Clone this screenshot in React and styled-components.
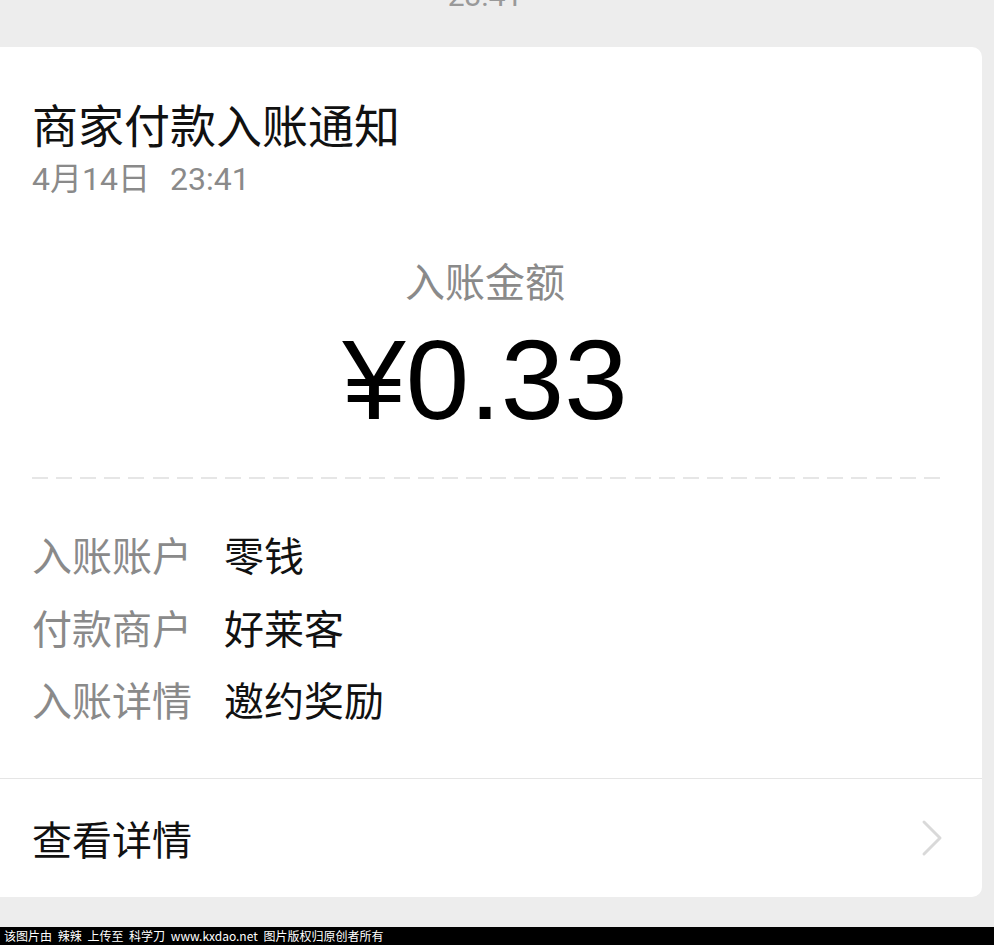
import styled, { createGlobalStyle } from "styled-components";

const GlobalStyle = createGlobalStyle`
    html, body {
        margin: 0;
        padding: 0;
        background: #EDEDED;
    }
    body {
        font-family: "Noto Sans CJK SC", "Noto Sans", sans-serif;
        overflow: hidden;
    }
`

const rows = [
    { label: "入账账户", value: "零钱" },
    { label: "付款商户", value: "好莱客" },
    { label: "入账详情", value: "邀约奖励" },
];

export default function App() {
    return (
        <Screen>
            <GlobalStyle />
            <Column>
                <TopBar>
                    <Stamp>23:41</Stamp>
                </TopBar>
                <Card>
                    <Body>
                        <Title>商家付款入账通知</Title>
                        <DateLine>4月14日<Time>23:41</Time></DateLine>
                        <AmountLabel>入账金额</AmountLabel>
                        <Amount>¥0.33</Amount>
                        <Dashed />
                        <Rows>
                            {rows.map(r =>
                                <Row key={r.label}>
                                    <Label>{r.label}</Label>
                                    <Value>{r.value}</Value>
                                </Row>
                            )}
                        </Rows>
                    </Body>
                    <Footer>
                        <span>查看详情</span>
                        <svg width="22" height="38" viewBox="0 0 22 38">
                            <polyline points="3,3 19,19 3,35" fill="none" stroke="#D9D9D9" strokeWidth="3" strokeLinecap="round" strokeLinejoin="round" />
                        </svg>
                    </Footer>
                </Card>
            </Column>
            <Watermark>该图片由 辣辣 上传至 科学刀 www.kxdao.net 图片版权归原创者所有</Watermark>
        </Screen>
    )
}

const Screen = styled.div`
    width: 994px;
    height: 945px;
    display: flex;
    flex-direction: column;
    justify-content: space-between;
    overflow: hidden;
`
const Column = styled.div`
    width: 994px;
    margin-left: -12px;
    display: flex;
    flex-direction: column;
`
const TopBar = styled.div`
    height: 47px;
    overflow: hidden;
    display: flex;
    justify-content: center;
`
const Stamp = styled.div`
    margin-top: -19px;
    font-family: Roboto, "Noto Sans CJK SC", sans-serif;
    font-size: 30px;
    line-height: 30px;
    color: #999999;
`
const Card = styled.div`
    background: #FFFFFF;
    border-radius: 10px;
    display: flex;
    flex-direction: column;
`
const Body = styled.div`
    padding: 46px 44px 42px;
    display: flex;
    flex-direction: column;
`
const Title = styled.div`
    font-size: 46px;
    line-height: 60px;
    color: #111111;
`
const DateLine = styled.div`
    margin-top: 4px;
    font-family: Roboto, "Noto Sans CJK SC", sans-serif;
    font-size: 32px;
    line-height: 44px;
    color: #8A8A8A;
`
const Time = styled.span`
    margin-left: 20px;
`
const AmountLabel = styled.div`
    margin-top: 54px;
    text-align: center;
    font-size: 40px;
    line-height: 50px;
    color: #8A8A8A;
`
const Amount = styled.div`
    margin-top: 10px;
    text-align: center;
    font-family: "Liberation Sans", Arial, sans-serif;
    font-size: 114px;
    line-height: 130px;
    color: #000000;
`
const Dashed = styled.div`
    margin: 32px -2px 0 0;
    height: 2px;
    background: repeating-linear-gradient(to right, #E6E6E6 0 16px, transparent 16px 24.1px);
`
const Rows = styled.div`
    margin-top: 39px;
    display: flex;
    flex-direction: column;
`
const Row = styled.div`
    display: flex;
    align-items: center;
    gap: 32px;
    height: 72.5px;
    font-size: 40px;
`
const Label = styled.span`
    color: #8A8A8A;
`
const Value = styled.span`
    color: #111111;
`
const Footer = styled.div`
    height: 118px;
    border-top: 1px solid #E5E5E5;
    padding: 0 39px 0 44px;
    display: flex;
    align-items: center;
    justify-content: space-between;
    font-size: 40px;
    color: #111111;
`
const Watermark = styled.div`
    height: 18px;
    background: #000000;
    color: #FFFFFF;
    font-size: 12px;
    line-height: 18px;
    padding-left: 4px;
    word-spacing: 3px;
    white-space: nowrap;
`
